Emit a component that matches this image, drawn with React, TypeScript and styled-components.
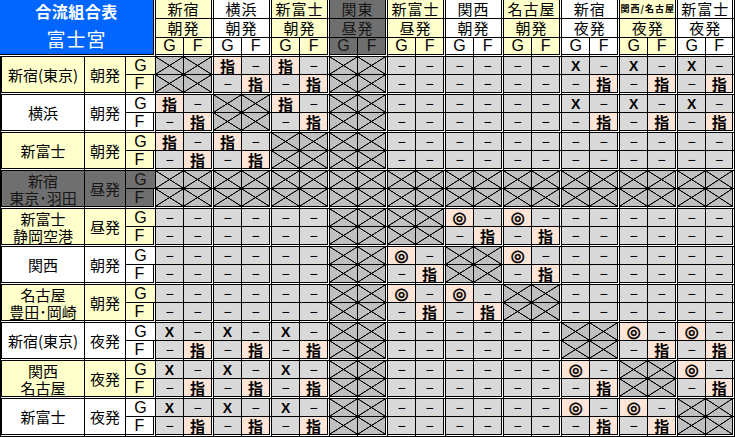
import React from 'react'
import styled, { createGlobalStyle, css } from 'styled-components'

type Tone = 'yellow' | 'white' | 'dark'
type Kind = 'cross' | 'dash' | 'shi' | 'maru' | 'batsu'

const toneBg: Record<Tone, string> = {
  yellow: '#ffffcc',
  white: '#ffffff',
  dark: '#6f6f6f',
}

const GlobalStyle = createGlobalStyle`
  html, body {
    margin: 0;
    padding: 0;
    background: #fff;
    overflow: hidden;
  }
`

const groups: { name: string; dep: string; tone: Tone; small?: boolean }[] = [
  { name: '新宿', dep: '朝発', tone: 'yellow' },
  { name: '横浜', dep: '朝発', tone: 'white' },
  { name: '新富士', dep: '朝発', tone: 'yellow' },
  { name: '関東', dep: '昼発', tone: 'dark' },
  { name: '新富士', dep: '昼発', tone: 'yellow' },
  { name: '関西', dep: '朝発', tone: 'white' },
  { name: '名古屋', dep: '朝発', tone: 'yellow' },
  { name: '新宿', dep: '夜発', tone: 'white' },
  { name: '関西/名古屋', dep: '夜発', tone: 'yellow', small: true },
  { name: '新富士', dep: '夜発', tone: 'white' },
]

// C = 斜線, - = 全て「−」, S = 指, X = ×, M = ◎
const routes: { name: string[]; dep: string; tone: Tone; marks: string }[] = [
  { name: ['新宿(東京)'], dep: '朝発', tone: 'yellow', marks: 'CSSC---XXX' },
  { name: ['横浜'], dep: '朝発', tone: 'white', marks: 'SCSC---XXX' },
  { name: ['新富士'], dep: '朝発', tone: 'yellow', marks: 'SSCC------' },
  { name: ['新宿', '東京･羽田'], dep: '昼発', tone: 'dark', marks: 'CCCCCCCCCC' },
  { name: ['新富士', '静岡空港'], dep: '昼発', tone: 'yellow', marks: '---CCMM---' },
  { name: ['関西'], dep: '朝発', tone: 'white', marks: '---CMCM---' },
  { name: ['名古屋', '豊田･岡崎'], dep: '朝発', tone: 'yellow', marks: '---CMMC---' },
  { name: ['新宿(東京)'], dep: '夜発', tone: 'white', marks: 'XXXC---CMM' },
  { name: ['関西', '名古屋'], dep: '夜発', tone: 'yellow', marks: 'XXXC---MCM' },
  { name: ['新富士'], dep: '夜発', tone: 'white', marks: 'XXXC---MMC' },
]

const blockOf = (code: string): Kind[][] => {
  switch (code) {
    case 'C':
      return [['cross', 'cross'], ['cross', 'cross']]
    case 'S':
      return [['shi', 'dash'], ['dash', 'shi']]
    case 'X':
      return [['batsu', 'dash'], ['dash', 'shi']]
    case 'M':
      return [['maru', 'dash'], ['dash', 'shi']]
    default:
      return [['dash', 'dash'], ['dash', 'dash']]
  }
}

const markText: Record<Kind, string> = {
  cross: '',
  dash: '−',
  shi: '指',
  maru: '◎',
  batsu: 'X',
}

const App = () => {
  return (
    <>
      <GlobalStyle />
      <Sheet>
        <colgroup>
          <Col $w={85} />
          <Col $w={41} />
          <Col $w={30} />
          {groups.map((g, i) => (
            <React.Fragment key={i}>
              <Col $w={28} />
              <Col $w={i === groups.length - 1 ? 29 : 30} />
            </React.Fragment>
          ))}
        </colgroup>
        <thead>
          <HeadRow>
            <Title colSpan={3} rowSpan={3} $endCol $endRow>
              <TitleMain>合流組合表</TitleMain>
              <TitleSub>富士宮</TitleSub>
            </Title>
            {groups.map((g, i) => (
              <Head key={i} colSpan={2} $tone={g.tone} $endCol $small={g.small}>
                {g.name}
              </Head>
            ))}
          </HeadRow>
          <HeadRow>
            {groups.map((g, i) => (
              <Head key={i} colSpan={2} $tone={g.tone} $endCol>
                {g.dep}
              </Head>
            ))}
          </HeadRow>
          <HeadRow>
            {groups.map((g, i) => (
              <React.Fragment key={i}>
                <Letter as="th" $tone={g.tone} $endRow>G</Letter>
                <Letter as="th" $tone={g.tone} $endCol $endRow>F</Letter>
              </React.Fragment>
            ))}
          </HeadRow>
        </thead>
        <tbody>
          {routes.map((r, ri) => {
            const blocks = r.marks.split('').map(blockOf)
            return (
              <React.Fragment key={ri}>
                <GRow>
                  <RouteName rowSpan={2} $tone={r.tone} $endRow>
                    {r.name.map((n, ni) => (
                      <NameLine key={ni}>{n}</NameLine>
                    ))}
                  </RouteName>
                  <Departure rowSpan={2} $tone={r.tone} $endRow>
                    {r.dep}
                  </Departure>
                  <Letter $tone={r.tone}>G</Letter>
                  {blocks.map((b, bi) => (
                    <React.Fragment key={bi}>
                      <Mark $kind={b[0][0]}>{markText[b[0][0]]}</Mark>
                      <Mark $kind={b[0][1]} $endCol>{markText[b[0][1]]}</Mark>
                    </React.Fragment>
                  ))}
                </GRow>
                <FRow>
                  <Letter $tone={r.tone} $endCol $endRow>F</Letter>
                  {blocks.map((b, bi) => (
                    <React.Fragment key={bi}>
                      <Mark $kind={b[1][0]} $endRow>{markText[b[1][0]]}</Mark>
                      <Mark $kind={b[1][1]} $endCol $endRow>{markText[b[1][1]]}</Mark>
                    </React.Fragment>
                  ))}
                </FRow>
              </React.Fragment>
            )
          })}
        </tbody>
      </Sheet>
    </>
  )
}

export default App

interface Edges {
  $endCol?: boolean
  $endRow?: boolean
}

const edges = css<Edges>`
  box-sizing: border-box;
  padding: 0;
  border-right: ${(p) => (p.$endCol ? '3px double #000' : '1px solid #000')};
  border-bottom: ${(p) => (p.$endRow ? '3px double #000' : '1px solid #000')};
  background-clip: padding-box;
  text-align: center;
  vertical-align: middle;
  white-space: nowrap;
  font-weight: 400;
`

const Sheet = styled.table`
  width: 735px;
  table-layout: fixed;
  border-collapse: separate;
  border-spacing: 0;
  background: #fff;
  color: #000;
  font-family: 'Noto Sans CJK JP', 'Noto Sans', sans-serif;
`
const Col = styled.col<{ $w: number }>`
  width: ${(p) => p.$w}px;
`
const HeadRow = styled.tr`
  height: 19px;
`
const GRow = styled.tr`
  height: 18px;
`
const FRow = styled.tr`
  height: 20px;
`
const Title = styled.th<Edges>`
  ${edges}
  vertical-align: top;
  background-color: #0066ff;
  color: #fff;
`
const TitleMain = styled.div`
  font-size: 16px;
  font-weight: 700;
  line-height: 23px;
  letter-spacing: 0.5px;
`
const TitleSub = styled.div`
  font-size: 19px;
  line-height: 31px;
  letter-spacing: 1px;
`
const Head = styled.th<Edges & { $tone: Tone; $small?: boolean }>`
  ${edges}
  background-color: ${(p) => toneBg[p.$tone]};
  color: ${(p) => (p.$tone === 'dark' ? '#161616' : '#000')};
  font-size: ${(p) => (p.$small ? '9px' : '15px')};
  font-weight: ${(p) => (p.$small ? 700 : 400)};
  line-height: 18px;
  letter-spacing: 1px;
`
const Letter = styled.td<Edges & { $tone: Tone }>`
  ${edges}
  background-color: ${(p) => toneBg[p.$tone]};
  color: ${(p) => (p.$tone === 'dark' ? '#161616' : '#000')};
  font-family: 'Liberation Sans', sans-serif;
  font-size: 16px;
  line-height: 16px;
`
const RouteName = styled.td<Edges & { $tone: Tone }>`
  ${edges}
  border-left: 2px solid #000;
  background-color: ${(p) => toneBg[p.$tone]};
  color: ${(p) => (p.$tone === 'dark' ? '#161616' : '#000')};
  font-size: 15px;
  line-height: 17px;
`
const NameLine = styled.div`
  line-height: 17px;
`
const Departure = styled.td<Edges & { $tone: Tone }>`
  ${edges}
  background-color: ${(p) => toneBg[p.$tone]};
  color: ${(p) => (p.$tone === 'dark' ? '#161616' : '#000')};
  font-size: 15px;
  line-height: 17px;
`

const diagonal = (dir: string) =>
  `linear-gradient(${dir}, transparent calc(50% - 0.7px), #000 calc(50% - 0.3px), #000 calc(50% + 0.3px), transparent calc(50% + 0.7px))`

const kindStyle: Record<Kind, ReturnType<typeof css>> = {
  cross: css`
    background-color: #c0c0c0;
    background-image: ${diagonal('to top right')}, ${diagonal('to bottom right')};
  `,
  dash: css`
    background-color: #d9d9d9;
    font-family: 'Liberation Sans', sans-serif;
    font-size: 14px;
  `,
  shi: css`
    background-color: #fce4d6;
    font-size: 15px;
    font-weight: 700;
  `,
  maru: css`
    background-color: #fce4d6;
    font-family: 'DejaVu Sans', sans-serif;
    font-size: 16px;
    font-weight: 700;
    color: #000;
    -webkit-text-stroke: 0.6px #000;
  `,
  batsu: css`
    background-color: #d9d9d9;
    font-family: 'Liberation Sans', sans-serif;
    font-size: 14px;
    font-weight: 700;
  `,
}

const Mark = styled.td<Edges & { $kind: Kind }>`
  ${edges}
  line-height: 16px;
  ${(p) => kindStyle[p.$kind]}
`
